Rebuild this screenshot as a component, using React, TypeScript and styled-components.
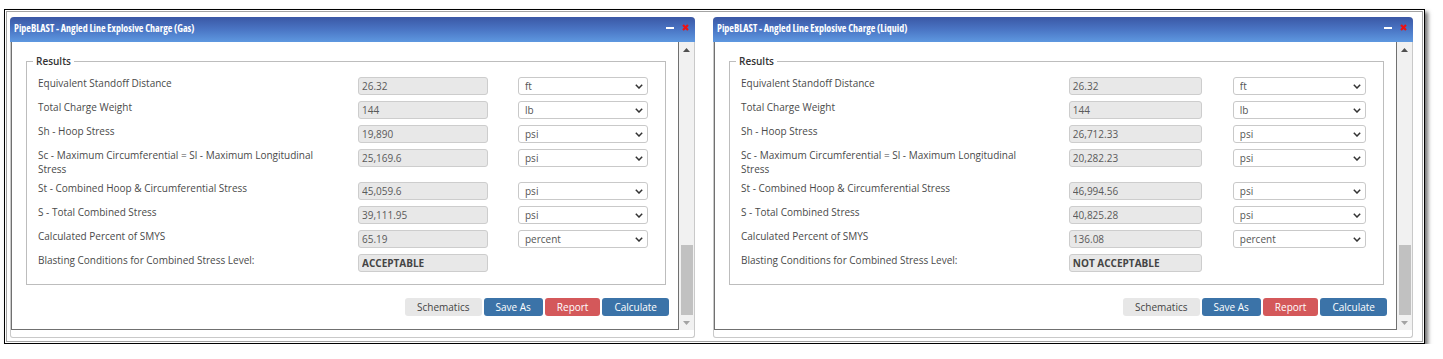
import React from "react";
import styled, { createGlobalStyle } from "styled-components";

const GlobalStyle = createGlobalStyle`
  html, body { margin: 0; padding: 0; background: #ffffff; }
  body { font-family: "Open Sans", "Liberation Sans", sans-serif; }
  * { box-sizing: border-box; }
`;

const Page = styled.div`
  padding: 9px 0 0 4px;
`;

const Frame = styled.div`
  display: inline-flex;
  align-items: flex-start;
  gap: 18px;
  padding: 7px 11px 5px 5px;
  border: 1px solid #000;
  background: #fff;
  box-shadow: inset 0 0 0 1px #fff, inset 0 0 0 2px #a3a3a3,
    3px 3px 4px rgba(0, 0, 0, 0.55);
`;

const Window = styled.section<{ $width: number }>`
  width: ${(p) => p.$width}px;
  display: flex;
  flex-direction: column;
  background: #fff;
  border: 1px solid #c9c9c9;
  border-top: none;
  border-radius: 4px 4px 3px 3px;
  padding-bottom: 7px;
`;

const TitleBar = styled.header`
  height: 25px;
  margin: 0 -1px;
  padding: 0 6px 4px 4px;
  display: flex;
  align-items: center;
  justify-content: space-between;
  border-radius: 4px 4px 0 0;
  background: linear-gradient(to bottom, #3a57a5 0%, #4a75c4 50%, #5e98e0 100%);
`;

const Title = styled.h1`
  margin: 0;
  font-size: 10px;
  line-height: 14px;
  font-weight: 700;
  font-stretch: 75%;
  color: #fff;
  white-space: nowrap;
`;

const TitleTools = styled.div`
  display: flex;
  align-items: center;
  gap: 8px;
  svg { display: block; }
`;

const Body = styled.div`
  display: flex;
  height: 288px;
`;

const ContentBox = styled.div`
  flex: 1;
  display: flex;
  flex-direction: column;
  padding: 12px 9px 13px 14px;
  border: 1px solid #707070;
  border-top: none;
`;

const Fieldset = styled.fieldset`
  margin: 0 3px 0 0;
  padding: 9px 17px 12px 11px;
  border: 1px solid #bdbdbd;
  min-width: 0;
`;

const Legend = styled.legend`
  margin-left: -5px;
  padding: 0 3px;
  font-size: 10px;
  line-height: 14px;
  font-weight: 600;
  color: #333;
`;

const Rows = styled.div`
  display: flex;
  flex-direction: column;
  gap: 6px;
`;

const Row = styled.div`
  display: grid;
  grid-template-columns: minmax(0, 320fr) minmax(0, 130fr) minmax(0, 30fr) minmax(0, 130fr);
  align-items: start;
`;

const Label = styled.label`
  padding: 0 25px 0 0;
  font-size: 10px;
  line-height: 13.5px;
  color: #4a4a4a;
`;

const ValueBox = styled.input<{ $strong?: boolean }>`
  display: block;
  width: 100%;
  height: 18px;
  margin: 0;
  padding: 0 3px;
  border: 1px solid #cdcdcd;
  border-radius: 3px;
  background: #e8e8e8;
  font-family: "Open Sans", "Liberation Sans", sans-serif;
  font-size: 10px;
  font-weight: ${(p) => (p.$strong ? 700 : 400)};
  color: ${(p) => (p.$strong ? "#444" : "#5a5a5a")};
  outline: none;
`;

const SelectWrap = styled.div`
  grid-column: 4;
  position: relative;
  height: 18px;
`;

const Select = styled.select`
  display: block;
  appearance: none;
  width: 100%;
  height: 18px;
  margin: 0;
  padding: 0 6px;
  border: 1px solid #c9c9c9;
  border-radius: 3px;
  background: #fff;
  font-family: "Open Sans", "Liberation Sans", sans-serif;
  font-size: 10px;
  color: #555;
  outline: none;
`;

const Chevron = styled.svg`
  position: absolute;
  right: 5px;
  top: 7px;
  width: 8px;
  height: 5px;
  pointer-events: none;
`;

const Actions = styled.div`
  margin-top: 13px;
  display: flex;
  justify-content: flex-end;
  gap: 2px;
`;

const Button = styled.button<{ $tone: "plain" | "primary" | "danger" }>`
  height: 18px;
  margin: 0;
  padding: 0 12px;
  border: none;
  border-radius: 3px;
  font-family: "Open Sans", "Liberation Sans", sans-serif;
  font-size: 10px;
  line-height: 18px;
  background: ${(p) =>
    p.$tone === "primary" ? "#3b73a8" : p.$tone === "danger" ? "#d4585a" : "#e7e7e7"};
  color: ${(p) => (p.$tone === "plain" ? "#444" : "#fff")};
`;

const Scrollbar = styled.div`
  width: 15px;
  display: flex;
  flex-direction: column;
  background: #f1f1f1;
`;

const ScrollArrow = styled.div`
  height: 15px;
  display: flex;
  align-items: center;
  justify-content: center;
`;

const Track = styled.div`
  flex: 1;
  display: flex;
  flex-direction: column;
  justify-content: flex-end;
`;

const Thumb = styled.div`
  height: 70px;
  margin: 0 1px 0 2px;
  background: #c1c1c1;
`;

type RowData = { label: string; value: string; unit?: string; strong?: boolean };

const chevron = (
  <Chevron viewBox="0 0 8 5">
    <path d="M0.8 0.8 L4 4 L7.2 0.8" fill="none" stroke="#333" strokeWidth="1.5" />
  </Chevron>
);

function PipeWindow({ title, width, rows }: { title: string; width: number; rows: RowData[] }) {
  return (
    <Window $width={width}>
      <TitleBar>
        <Title>{title}</Title>
        <TitleTools>
          <svg width="8" height="8" viewBox="0 0 8 8">
            <rect x="0" y="3" width="8" height="2" fill="#fff" />
          </svg>
          <svg width="7" height="7" viewBox="0 0 7 7">
            <path d="M1 1 L6 6 M6 1 L1 6" stroke="#ee1111" strokeWidth="2.2" />
          </svg>
        </TitleTools>
      </TitleBar>
      <Body>
        <ContentBox>
          <Fieldset>
            <Legend>Results</Legend>
            <Rows>
              {rows.map((r) => (
                <Row key={r.label}>
                  <Label>{r.label}</Label>
                  <ValueBox readOnly value={r.value} $strong={r.strong} />
                  {r.unit && (
                    <SelectWrap>
                      <Select defaultValue={r.unit}>
                        <option value={r.unit}>{r.unit}</option>
                      </Select>
                      {chevron}
                    </SelectWrap>
                  )}
                </Row>
              ))}
            </Rows>
          </Fieldset>
          <Actions>
            <Button $tone="plain">Schematics</Button>
            <Button $tone="primary">Save As</Button>
            <Button $tone="danger">Report</Button>
            <Button $tone="primary">Calculate</Button>
          </Actions>
        </ContentBox>
        <Scrollbar>
          <ScrollArrow>
            <svg width="7" height="4" viewBox="0 0 7 4">
              <path d="M0 4 L3.5 0 L7 4 Z" fill="#505050" />
            </svg>
          </ScrollArrow>
          <Track>
            <Thumb />
          </Track>
          <ScrollArrow>
            <svg width="7" height="4" viewBox="0 0 7 4">
              <path d="M0 0 L3.5 4 L7 0 Z" fill="#a3a3a3" />
            </svg>
          </ScrollArrow>
        </Scrollbar>
      </Body>
    </Window>
  );
}

const gasRows: RowData[] = [
  { label: "Equivalent Standoff Distance", value: "26.32", unit: "ft" },
  { label: "Total Charge Weight", value: "144", unit: "lb" },
  { label: "Sh - Hoop Stress", value: "19,890", unit: "psi" },
  { label: "Sc - Maximum Circumferential = Sl - Maximum Longitudinal Stress", value: "25,169.6", unit: "psi" },
  { label: "St - Combined Hoop & Circumferential Stress", value: "45,059.6", unit: "psi" },
  { label: "S - Total Combined Stress", value: "39,111.95", unit: "psi" },
  { label: "Calculated Percent of SMYS", value: "65.19", unit: "percent" },
  { label: "Blasting Conditions for Combined Stress Level:", value: "ACCEPTABLE", strong: true },
];

const liquidRows: RowData[] = [
  { label: "Equivalent Standoff Distance", value: "26.32", unit: "ft" },
  { label: "Total Charge Weight", value: "144", unit: "lb" },
  { label: "Sh - Hoop Stress", value: "26,712.33", unit: "psi" },
  { label: "Sc - Maximum Circumferential = Sl - Maximum Longitudinal Stress", value: "20,282.23", unit: "psi" },
  { label: "St - Combined Hoop & Circumferential Stress", value: "46,994.56", unit: "psi" },
  { label: "S - Total Combined Stress", value: "40,825.28", unit: "psi" },
  { label: "Calculated Percent of SMYS", value: "136.08", unit: "percent" },
  { label: "Blasting Conditions for Combined Stress Level:", value: "NOT ACCEPTABLE", strong: true },
];

export default function App() {
  return (
    <>
      <GlobalStyle />
      <Page>
        <Frame>
          <PipeWindow title="PipeBLAST - Angled Line Explosive Charge (Gas)" width={685} rows={gasRows} />
          <PipeWindow title="PipeBLAST - Angled Line Explosive Charge (Liquid)" width={700} rows={liquidRows} />
        </Frame>
      </Page>
    </>
  );
}
